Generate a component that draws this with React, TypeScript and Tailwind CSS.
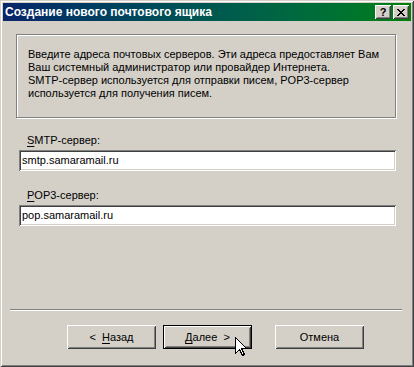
import React from 'react';

const raised =
  'shadow-[inset_1px_1px_#ffffff,inset_-1px_-1px_#404040,inset_2px_2px_#d4d0c8,inset_-2px_-2px_#808080]';
const sunken =
  'shadow-[inset_1px_1px_#808080,inset_-1px_-1px_#ffffff,inset_2px_2px_#404040,inset_-2px_-2px_#d4d0c8]';

function TitleButton({ children }: { children: React.ReactNode }) {
  return (
    <div
      className={`w-[16px] h-[14px] bg-[#d4d0c8] ${raised} flex items-center justify-center text-black text-[11px] font-bold leading-none`}
    >
      {children}
    </div>
  );
}

function Field({ mnemonic, rest, value, top }: { mnemonic: string; rest: string; value: string; top: string }) {
  return (
    <div className={`${top} shrink-0`}>
      <div className="ml-[24px] h-[13px] leading-[13px]">
        <span className="underline underline-offset-[2px]">{mnemonic}</span>
        {rest}
      </div>
      <div className={`mt-[3px] ml-[16px] w-[377px] h-[21px] bg-white ${sunken} px-[3px] flex items-center`}>
        {value}
      </div>
    </div>
  );
}

function Button({ children, primary }: { children: React.ReactNode; primary?: boolean }) {
  return (
    <div
      className={`w-[89px] h-[24px] bg-[#d4d0c8] flex items-center justify-center ${
        primary ? 'border border-black ' + raised : raised
      }`}
    >
      {children}
    </div>
  );
}

export default function App() {
  return (
    <div
      className="relative w-[414px] h-[367px] bg-[#d4d0c8] p-[3px] flex flex-col text-[11px] text-black shadow-[inset_1px_1px_#d4d0c8,inset_-1px_-1px_#404040,inset_2px_2px_#ffffff,inset_-2px_-2px_#808080]"
      style={{ fontFamily: '"Liberation Sans", Arial, sans-serif' }}
    >
      <div className="shrink-0 h-[18px] bg-gradient-to-r from-[#0a246a] to-[#008000] flex items-center pl-[2px] pr-[2px]">
        <span className="text-white font-bold text-[12px] leading-none">Создание нового почтового ящика</span>
        <div className="ml-auto flex gap-[2px]">
          <TitleButton>?</TitleButton>
          <TitleButton>
            <svg width="8" height="7" viewBox="0 0 8 7" shapeRendering="crispEdges">
              <path d="M0 0h2v1H0zM6 0h2v1H6zM1 1h2v1H1zM5 1h2v1H5zM2 2h4v1H2zM3 3h2v1H3zM2 4h4v1H2zM1 5h2v1H1zM5 5h2v1H5zM0 6h2v1H0zM6 6h2v1H6z" fill="#000" />
            </svg>
          </TitleButton>
        </div>
      </div>

      <div className="shrink-0 ml-[13px] mt-[13px] w-[380px] h-[84px] border border-[#808080] shadow-[1px_1px_#ffffff,inset_1px_1px_#ffffff] pl-[11px] pt-[13px] leading-[13px]">
        <p>Введите адреса почтовых серверов. Эти адреса предоставляет Вам</p>
        <p>Ваш системный администратор или провайдер Интернета.</p>
        <p>SMTP-сервер используется для отправки писем, POP3-сервер</p>
        <p>используется для получения писем.</p>
      </div>

      <Field top="mt-[16px]" mnemonic="S" rest="MTP-сервер:" value="smtp.samaramail.ru" />
      <Field top="mt-[18px]" mnemonic="P" rest="OP3-сервер:" value="pop.samaramail.ru" />

      <div className="shrink-0 mt-[83px] ml-[7px] w-[392px] h-[2px] border-t border-[#808080] border-b border-b-white" />

      <div className="shrink-0 mt-[14px] ml-[64px] flex">
        <Button>
          <span>&lt;&nbsp;&nbsp;</span>
          <span className="underline underline-offset-[2px]">Н</span>
          <span>азад</span>
        </Button>
        <div className="ml-[7px]">
          <Button primary>
            <span className="underline underline-offset-[2px]">Д</span>
            <span>алее&nbsp;&nbsp;&gt;</span>
          </Button>
        </div>
        <div className="ml-[23px]">
          <Button>Отмена</Button>
        </div>
      </div>

      <svg
        className="absolute left-[235px] top-[337px]"
        width="12"
        height="20"
        viewBox="0 0 12 20"
        shapeRendering="crispEdges"
      >
        <path d="M0.5 0.5 V16.5 L4.5 12.5 L7.5 18.5 L9.5 17.5 L6.5 11.5 H11.5 Z" fill="#fff" stroke="#000" strokeWidth="1" />
      </svg>
    </div>
  );
}
